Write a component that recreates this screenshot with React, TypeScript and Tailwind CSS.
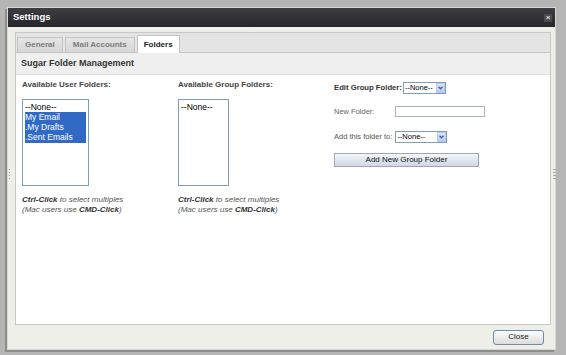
import React from 'react';

const font = { fontFamily: '"Liberation Sans", Arial, sans-serif' };

function Dropdown({ wide }: { wide?: boolean }) {
  return (
    <div
      className={`flex h-[12px] border border-[#7f9db9] bg-white ${wide ? 'w-[52px]' : 'w-[43px]'}`}
    >
      <span className="flex-1 pl-[1px] text-[7.5px] leading-[10px] text-black">--None--</span>
      <span className="flex w-[9px] items-center justify-center border border-[#b9c9ef] bg-gradient-to-b from-[#dbe6fd] to-[#b6cbf7]">
        <svg width="5" height="4" viewBox="0 0 5 4">
          <path d="M0.5 0.8 L2.5 2.8 L4.5 0.8" fill="none" stroke="#4d6185" strokeWidth="1.3" />
        </svg>
      </span>
    </div>
  );
}

function Listbox({
  items,
  selected,
  width,
}: {
  items: string[];
  selected: number[];
  width: string;
}) {
  return (
    <div className={`${width} h-[87px] border border-[#7f9db9] bg-white p-[2px]`}>
      {items.map((it, i) => (
        <div
          key={it}
          className={`h-[10.3px] text-[8.5px] leading-[10.3px] whitespace-nowrap ${
            selected.includes(i) ? 'bg-[#316ac5] text-white' : 'text-black'
          }`}
        >
          {it}
        </div>
      ))}
    </div>
  );
}

function Hint() {
  return (
    <div className="mt-[9.5px] text-[8px] leading-[10px] italic text-[#555]">
      <div>
        <b className="text-[#333]">Ctrl-Click</b> to select multiples
      </div>
      <div>
        (Mac users use <b className="text-[#333]">CMD-Click</b>)
      </div>
    </div>
  );
}

function Grip({ bars }: { bars?: boolean }) {
  return (
    <div className="flex flex-col gap-[2px]">
      {[0, 1, 2, 3].map((i) => (
        <span
          key={i}
          className={bars ? 'block h-[1px] w-[3px] bg-[#a8a8a8]' : 'block h-[1px] w-[1px] bg-[#9a9a9a]'}
        />
      ))}
    </div>
  );
}

export default function App() {
  return (
    <div className="h-[355px] w-[566px] overflow-hidden bg-[#b5b5b5] pl-[7px] pt-[7px]" style={font}>
      <div className="relative flex h-[343px] w-[549px] flex-col border border-[#d6d6d2] bg-[#efefea] shadow-[-2px_2px_0_#8e8e8e]">
        {/* Title bar */}
        <div className="flex h-[19px] items-center justify-between bg-gradient-to-b from-[#3d3d43] to-[#26262a] pl-[5px] pr-[3px]">
          <span className="text-[9.5px] font-bold text-white">Settings</span>
          <span className="flex h-[8px] w-[8px] items-center justify-center bg-[#4a4a50] text-[8px] font-bold leading-none text-[#d8d8d8]">
            ×
          </span>
        </div>

        {/* Panel */}
        <div className="ml-[7px] mt-[5px] flex h-[293px] w-[536px] flex-col border border-[#c8c8c8] bg-white">
          {/* Tabs */}
          <div className="flex h-[20px] items-end gap-[2px] border-b border-[#c8c8c8] bg-[#e4e4e4] pl-[1px]">
            <div className="mb-[-1px] flex h-[16px] items-center border border-[#c4c4c4] bg-gradient-to-b from-[#e4e4e4] to-[#d6d6d6] px-[7px] text-[8px] font-bold text-[#7c7c7c]">
              General
            </div>
            <div className="mb-[-1px] flex h-[16px] items-center border border-[#c4c4c4] bg-gradient-to-b from-[#e4e4e4] to-[#d6d6d6] px-[7px] text-[8px] font-bold text-[#7c7c7c]">
              Mail Accounts
            </div>
            <div className="mb-[-1px] flex h-[18px] items-center border border-b-0 border-[#c4c4c4] bg-white px-[6px] text-[8px] font-bold text-[#222]">
              Folders
            </div>
          </div>

          {/* Header */}
          <div className="flex h-[22px] items-center border-b border-[#e2e2e2] bg-[#efefef] pl-[5px] text-[9px] font-bold text-[#333]">
            Sugar Folder Management
          </div>

          {/* Content */}
          <div className="grid flex-1 grid-cols-[156px_156px_1fr] pl-[6px]">
            <div className="pt-[5px]">
              <div className="text-[8px] font-bold leading-[10px] text-[#444]">Available User Folders:</div>
              <div className="mt-[8.5px]">
                <Listbox
                  width="w-[67px]"
                  items={['--None--', 'My Email', '.My Drafts', '.Sent Emails']}
                  selected={[1, 2, 3]}
                />
              </div>
              <Hint />
            </div>

            <div className="pt-[5px]">
              <div className="text-[8px] font-bold leading-[10px] text-[#444]">Available Group Folders:</div>
              <div className="mt-[8.5px]">
                <Listbox width="w-[51px]" items={['--None--']} selected={[]} />
              </div>
              <Hint />
            </div>

            <div className="flex flex-col items-start pt-[7px]">
              <div className="flex h-[12px] items-center gap-[1px]">
                <span className="text-[7.7px] font-bold text-[#333]">Edit Group Folder:</span>
                <Dropdown />
              </div>
              <div className="mt-[12px] flex h-[11px] items-center">
                <span className="w-[61px] text-[7.5px] text-[#666]">New Folder:</span>
                <div className="h-[11px] w-[90px] border border-[#a5b6cc] bg-white" />
              </div>
              <div className="mt-[14px] flex h-[12px] items-center gap-[3px]">
                <span className="text-[7.5px] text-[#555]">Add this folder to:</span>
                <Dropdown wide />
              </div>
              <button className="mt-[10px] flex h-[14px] w-[145px] items-center justify-center border border-[#9aa8ba] bg-gradient-to-b from-[#f4f6f9] to-[#cfd8e3] text-[8px] text-[#111]">
                Add New Group Folder
              </button>
            </div>
          </div>
        </div>

        {/* Footer */}
        <div className="flex flex-1 items-center justify-end pr-[11px]">
          <button className="flex h-[15px] w-[51px] items-center justify-center rounded-[3px] border border-[#6f8cad] bg-gradient-to-b from-[#fdfdfd] to-[#dcdcdc] text-[8px] text-[#222]">
            Close
          </button>
        </div>

        {/* Resize grips */}
        <div className="absolute left-[1px] top-[161px]">
          <Grip />
        </div>
        <div className="absolute right-[-1px] top-[161px]">
          <Grip bars />
        </div>
      </div>
    </div>
  );
}
